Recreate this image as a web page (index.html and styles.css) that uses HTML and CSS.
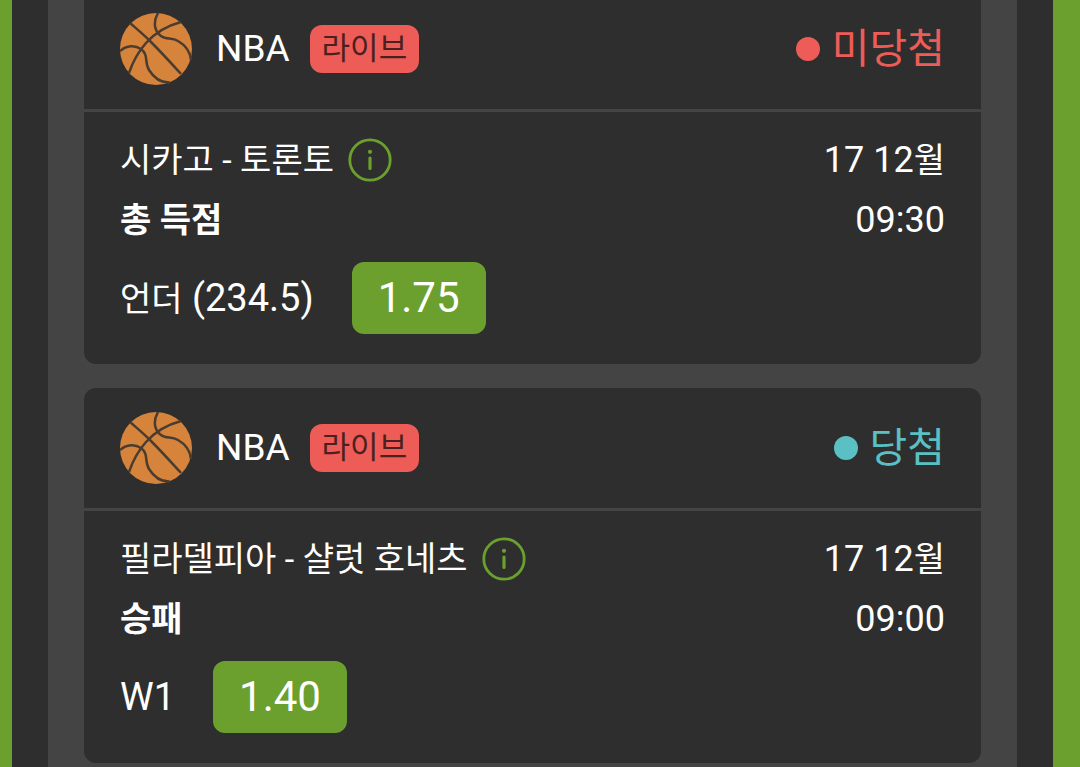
FILE: index.html
```html
<!DOCTYPE html>
<html lang="ko">
<head>
    <meta charset="UTF-8">
    <meta name="viewport" content="width=device-width, initial-scale=1.0">
    <title>NBA</title>
    <link rel="stylesheet" href="styles.css">
</head>
<body>
    <!-- Shared icons -->
    <svg class="sprite" aria-hidden="true">
        <symbol id="basketball" viewBox="0 0 72 72">
            <circle cx="36" cy="36" r="36" fill="#d6843c"/>
            <g fill="none" stroke="#4a3d30" stroke-width="2.5">
                <path d="M10 10C18 17 24 22 30 28C42 40 51 50 61 61"/>
                <path d="M9 60C13 48 18 39 26 30C34 21 46 13 61 9"/>
                <path d="M38 0C33 9 34 18 41 23C46 27 52 24 58 28C65 32 70 38 71 47"/>
                <path d="M0 38C7 32 15 32 21 36C29 42 24 49 29 57C34 65 41 70 50 69.5"/>
            </g>
        </symbol>
        <symbol id="info" viewBox="0 0 44 44">
            <circle cx="22" cy="22" r="20.2" fill="none" stroke="#6ba02f" stroke-width="2.8"/>
            <circle cx="22" cy="13.8" r="2.1" fill="#6ba02f"/>
            <path d="M22 20V30.5" fill="none" stroke="#6ba02f" stroke-width="3.2" stroke-linecap="round"/>
        </symbol>
    </svg>

    <main class="coupon">
        <div class="bets">
            <article class="bet bet-first">
                <header class="bet-header">
                    <svg class="ball" aria-hidden="true"><use href="#basketball"/></svg>
                    <span class="league">NBA</span>
                    <span class="live">라이브</span>
                    <span class="status lost">미당첨</span>
                </header>
                <div class="bet-body">
                    <div class="row">
                        <span class="match">시카고 - 토론토</span>
                        <button class="info" type="button" aria-label="정보"><svg aria-hidden="true"><use href="#info"/></svg></button>
                        <span class="date">17 12<span class="korean">월</span></span>
                    </div>
                    <div class="row">
                        <strong class="market">총 득점</strong>
                        <time class="date">09:30</time>
                    </div>
                    <div class="pick">
                        <span class="outcome"><span class="korean">언더</span> (234.5)</span>
                        <span class="odds">1.75</span>
                    </div>
                </div>
            </article>

            <article class="bet">
                <header class="bet-header">
                    <svg class="ball" aria-hidden="true"><use href="#basketball"/></svg>
                    <span class="league">NBA</span>
                    <span class="live">라이브</span>
                    <span class="status won">당첨</span>
                </header>
                <div class="bet-body">
                    <div class="row">
                        <span class="match">필라델피아 - 샬럿 호네츠</span>
                        <button class="info" type="button" aria-label="정보"><svg aria-hidden="true"><use href="#info"/></svg></button>
                        <span class="date">17 12<span class="korean">월</span></span>
                    </div>
                    <div class="row">
                        <strong class="market">승패</strong>
                        <time class="date">09:00</time>
                    </div>
                    <div class="pick">
                        <span class="outcome">W1</span>
                        <span class="odds">1.40</span>
                    </div>
                </div>
            </article>
        </div>
    </main>
</body>
</html>
```
FILE: styles.css
```css
* {
    box-sizing: border-box;
}

body {
    margin: 0;
    padding: 0 27px 0 12px;
    background: #6ba02f;
    color: #fff;
    font-family: Roboto, "Noto Sans CJK KR", sans-serif;
    font-size: 36px;
}

.sprite {
    display: none;
}

.coupon {
    padding: 0 36px;
    background: #2e2e2e;
}

.bets {
    display: flex;
    flex-direction: column;
    gap: 24px;
    padding: 0 36px 4px;
    background: #444;
}

.bet {
    border-radius: 12px;
    background: #2e2e2e;
}

.bet-first {
    border-radius: 0 0 12px 12px;
}

.bet-header {
    display: flex;
    align-items: center;
    padding: 24px 36px;
    border-bottom: 3px solid #444;
}

.bet-first .bet-header {
    padding-top: 13px;
}

.ball {
    width: 72px;
    height: 72px;
    margin-right: 24px;
}

.league {
    font-size: 37px;
    line-height: 48px;
}

.live {
    margin-left: 20px;
    padding: 0 12px;
    border-radius: 12px;
    background: #ed5c57;
    color: #4d2020;
    font-size: 31px;
    line-height: 48px;
}

.status {
    display: flex;
    align-items: center;
    gap: 12px;
    margin-left: auto;
    font-size: 41px;
    line-height: 48px;
}

.status::before {
    content: "";
    width: 24px;
    height: 24px;
    border-radius: 50%;
    background: currentColor;
}

.lost {
    color: #ed5c57;
}

.won {
    color: #5bc0c3;
}

.bet-body {
    padding: 18px 36px 30px;
}

.row {
    display: flex;
    align-items: center;
    line-height: 60px;
}

.match,
.market,
.korean {
    font-size: 34px;
}

.info {
    width: 44px;
    height: 44px;
    margin-left: 14px;
    padding: 0;
    border: none;
    background: none;
    cursor: pointer;
}

.info svg {
    display: block;
    width: 44px;
    height: 44px;
}

.date {
    margin-left: auto;
}

.pick {
    display: flex;
    align-items: center;
    gap: 38px;
    margin-top: 12px;
}

.outcome {
    font-size: 38px;
    line-height: 60px;
}

.odds {
    padding: 0 26px;
    border-radius: 12px;
    background: #6ba02f;
    font-size: 42px;
    line-height: 72px;
}
```
